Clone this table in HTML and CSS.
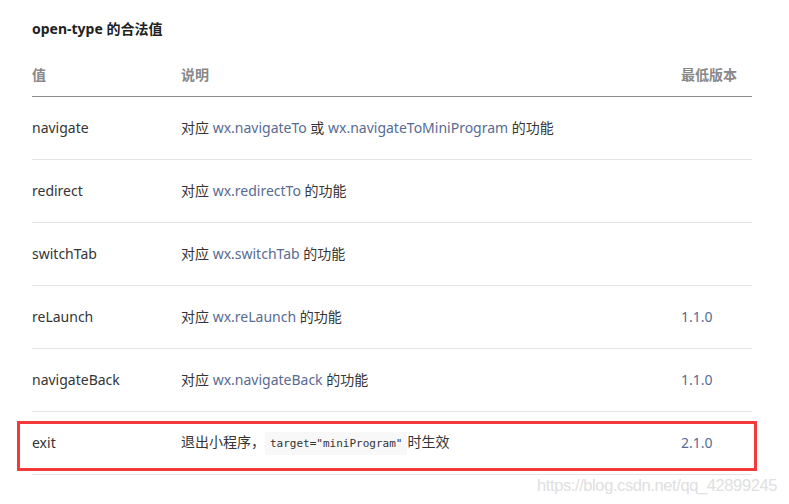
FILE: index.html
```html
<!DOCTYPE html>
<html lang="zh-CN">
<head>
    <meta charset="UTF-8">
    <title>open-type 的合法值</title>
    <link rel="stylesheet" href="styles.css">
</head>
<body>
    <div class="doc">
        <h4 class="doc-title">open-type 的合法值</h4>

        <div class="table">
            <div class="row head">
                <div class="cell c-val">值</div>
                <div class="cell c-desc">说明</div>
                <div class="cell c-ver">最低版本</div>
            </div>
            <div class="row">
                <div class="cell c-val">navigate</div>
                <div class="cell c-desc">对应 <a>wx.navigateTo</a> 或 <a>wx.navigateToMiniProgram</a> 的功能</div>
                <div class="cell c-ver"></div>
            </div>
            <div class="row">
                <div class="cell c-val">redirect</div>
                <div class="cell c-desc">对应 <a>wx.redirectTo</a> 的功能</div>
                <div class="cell c-ver"></div>
            </div>
            <div class="row">
                <div class="cell c-val">switchTab</div>
                <div class="cell c-desc">对应 <a>wx.switchTab</a> 的功能</div>
                <div class="cell c-ver"></div>
            </div>
            <div class="row">
                <div class="cell c-val">reLaunch</div>
                <div class="cell c-desc">对应 <a>wx.reLaunch</a> 的功能</div>
                <div class="cell c-ver"><a>1.1.0</a></div>
            </div>
            <div class="row">
                <div class="cell c-val">navigateBack</div>
                <div class="cell c-desc">对应 <a>wx.navigateBack</a> 的功能</div>
                <div class="cell c-ver"><a>1.1.0</a></div>
            </div>
            <div class="row marked">
                <div class="cell c-val">exit</div>
                <div class="cell c-desc">退出小程序，<code>target="miniProgram"</code>时生效</div>
                <div class="cell c-ver"><a>2.1.0</a></div>
            </div>
        </div>
    </div>

    <div class="watermark">https://blog.csdn.net/qq_42899245</div>
</body>
</html>
```

FILE: styles.css
```css
body {
    margin: 0;
    background: #fff;
    color: #353535;
    font-family: "Noto Sans", "Noto Sans CJK SC", sans-serif;
    font-size: 14px;
}
.doc {
    width: 720px;
    padding: 19px 0 0 32px;
}
.doc-title {
    margin: 0 0 15px;
    font-size: 14px;
    line-height: 20px;
    font-weight: bold;
    color: #222;
}
.table {
    display: flex;
    flex-direction: column;
}
.row {
    display: grid;
    grid-template-columns: 149px 500px 71px;
    height: 62px;
    align-items: center;
    border-bottom: 1px solid #e5e5e5;
}
.row.head {
    height: 42px;
    border-bottom: 1px solid #8c8c8c;
    color: #888;
    font-weight: bold;
}
.cell {
    line-height: 20px;
}
a {
    color: #576b95;
    text-decoration: none;
}
code {
    display: inline-block;
    background: #f8f8f8;
    padding: 0 5px;
    line-height: 23px;
    font-family: "DejaVu Sans Mono", monospace;
    font-size: 11px;
    color: #333;
}
.marked {
    position: relative;
}
.marked::after {
    content: "";
    position: absolute;
    left: -15px;
    right: -5px;
    top: 9px;
    bottom: 3px;
    border: 3px solid #f33a3a;
}
.watermark {
    position: absolute;
    left: 537px;
    top: 476px;
    font-family: "Liberation Sans", sans-serif;
    font-size: 16.5px;
    letter-spacing: -0.4px;
    color: #e0e0e0;
}
```
